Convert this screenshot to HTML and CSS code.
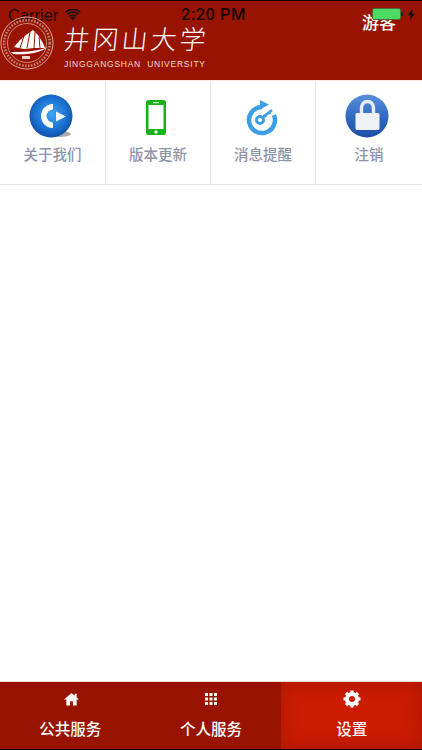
FILE: index.html
```html
<!DOCTYPE html>
<html lang="zh-CN">
<head>
    <meta charset="UTF-8">
    <meta name="viewport" content="width=device-width, initial-scale=1.0">
    <title>井冈山大学</title>
    <link rel="stylesheet" href="styles.css">
</head>
<body>

    <div id="app">
        <!-- Header with logo and status bar over it -->
        <div class="header">
            <div class="statusBar">
                <div class="statusLeft">
                    <span>Carrier</span>
                    <svg class="wifi" width="16" height="12" viewBox="0 0 16 12">
                        <path d="M8 11.5 5.6 8.6a3.6 3.6 0 0 1 4.8 0z" fill="#111"/>
                        <path d="M3.9 6.7a6.2 6.2 0 0 1 8.2 0l-1 1.2a4.7 4.7 0 0 0-6.2 0z" fill="#111"/>
                        <path d="M2 4.6a9 9 0 0 1 12 0l-1 1.2a7.4 7.4 0 0 0-10 0z" fill="#111"/>
                        <path d="M.2 2.5a11.8 11.8 0 0 1 15.6 0l-1 1.2a10.2 10.2 0 0 0-13.6 0z" fill="#111"/>
                    </svg>
                </div>
                <div class="statusTime">2:20 PM</div>
            </div>
            <div class="headerMain">
                <div class="logo">
                    <svg class="seal" width="54" height="54" viewBox="0 0 54 54">
                        <circle cx="27" cy="27" r="26" fill="none" stroke="#e3b9b2" stroke-width=".9"/>
                        <circle cx="27" cy="27" r="19.5" fill="none" stroke="#e3b9b2" stroke-width=".7"/>
                        <circle cx="27" cy="27" r="22.8" fill="none" stroke="#c67f74" stroke-width="2.6" stroke-dasharray="1.6 1.4"/>
                        <path d="M14 31 20 24 26 19 33 14 38 19 43 27 45 32 34 32 24 33z" fill="#fff"/>
                        <path d="M24 20 20 32M30 16 27 32M35 16 34 32M39 21 40 32" stroke="#981400" stroke-width="1" fill="none"/>
                        <path d="M11 36C20 36 36 36 48 31 40 37 28 39 13 38z" fill="#fff"/>
                        <rect x="22" y="40" width="8" height="3" fill="#f0d4cf"/>
                    </svg>
                    <div class="logoText">
                        <div class="logoCn">井冈山大学</div>
                        <div class="logoEn">JINGGANGSHAN&nbsp; UNIVERSITY</div>
                    </div>
                </div>
                <div class="guest">游客</div>
            </div>
            <div class="statusRight">
                <span class="battery"></span>
                <span class="batteryTip"></span>
                <svg width="7" height="11" viewBox="0 0 7 11"><path d="M4.4 0 0 6.2h2.6L1.9 11 7 4.4H4z" fill="#111"/></svg>
            </div>
        </div>

        <!-- Settings grid -->
        <div class="menuRow">
            <div class="menuItem">
                <svg width="44" height="44" viewBox="0 0 44 44">
                    <defs>
                        <radialGradient id="aboutBall" cx="50%" cy="45%" r="58%">
                            <stop offset="0" stop-color="#3ea6f2"/>
                            <stop offset=".65" stop-color="#1a6fd0"/>
                            <stop offset="1" stop-color="#0d4c9e"/>
                        </radialGradient>
                    </defs>
                    <ellipse cx="31" cy="40" rx="11" ry="3" fill="#aaa"/>
                    <circle cx="22" cy="22" r="21.5" fill="url(#aboutBall)"/>
                    <path d="M24 10A12 12 0 0 0 24 34V28.500A6.500 6.500 0 0 1 24 15.500z" fill="#fff"/>
                    <path d="M27 17.500 37 22.500 27 27.500z" fill="#e8f3fc"/>
                </svg>
                <span>关于我们</span>
            </div>
            <div class="menuItem">
                <svg width="44" height="44" viewBox="0 0 44 44">
                    <rect x="12" y="6" width="20" height="35" rx="2.500" fill="#18b318"/>
                    <rect x="14.500" y="11" width="15" height="24" fill="#fff"/>
                    <rect x="19" y="8" width="6" height="1.200" fill="#d6f2d6"/>
                    <circle cx="22" cy="38" r="1.700" fill="#fff"/>
                </svg>
                <span>版本更新</span>
            </div>
            <div class="menuItem">
                <svg width="44" height="44" viewBox="0 0 44 44">
                    <path d="M23 13A13 13 0 1 0 35 21" fill="none" stroke="#3c9fe6" stroke-width="4.500"/>
                    <path d="M21 6 30 10.500 21 15.500z" fill="#3c9fe6"/>
                    <circle cx="21" cy="26" r="3.500" fill="none" stroke="#3c9fe6" stroke-width="3"/>
                    <path d="M23.500 23.500 33 16M27 23 25 20.500M31 20 29 17.500" fill="none" stroke="#3c9fe6" stroke-width="2.600"/>
                </svg>
                <span>消息提醒</span>
            </div>
            <div class="menuItem">
                <svg width="44" height="44" viewBox="0 0 44 44">
                    <defs>
                        <linearGradient id="lockBall" x1="0" y1="0" x2="0" y2="1">
                            <stop offset="0" stop-color="#5b8fdc"/>
                            <stop offset=".55" stop-color="#2f69bf"/>
                            <stop offset="1" stop-color="#1c4da6"/>
                        </linearGradient>
                    </defs>
                    <circle cx="22" cy="22" r="21.500" fill="url(#lockBall)"/>
                    <path d="M16.500 20v-6.500a6 6 0 0 1 12 0V20" fill="none" stroke="#e8edf5" stroke-width="3.400"/>
                    <rect x="10.500" y="19" width="24" height="17" rx="1.500" fill="#eef1f6"/>
                </svg>
                <span>注销</span>
            </div>
        </div>

        <div class="content"></div>

        <!-- Bottom tabs -->
        <div class="tabBar">
            <div class="tab">
                <svg class="homeIcon" width="15" height="14" viewBox="0 0 16 14"><path d="M8 .5 0 7.500h2.500V14h4V9.500h3V14h4V7.500H16l-2.500-2.200V1.500h-2v2z" fill="#fff"/></svg>
                <span>公共服务</span>
            </div>
            <div class="tab">
                <svg width="14" height="14" viewBox="0 0 14 14" fill="#fff">
                    <rect x="1" y="1" width="3" height="3"/><rect x="5.500" y="1" width="3" height="3"/><rect x="10" y="1" width="3" height="3"/>
                    <rect x="1" y="5.500" width="3" height="3"/><rect x="5.500" y="5.500" width="3" height="3"/><rect x="10" y="5.500" width="3" height="3"/>
                    <rect x="1" y="10" width="3" height="3"/><rect x="5.500" y="10" width="3" height="3"/><rect x="10" y="10" width="3" height="3"/>
                </svg>
                <span>个人服务</span>
            </div>
            <div class="tab active">
                <svg width="18" height="18" viewBox="0 0 18 18">
                    <circle cx="9" cy="9" r="5" fill="none" stroke="#fff" stroke-width="4"/>
                    <path d="M9 .5V4M9 14v3.500M.5 9H4M14 9h3.500M3 3l2.500 2.500M12.500 12.500 15 15M3 15l2.500-2.500M12.500 5.500 15 3" stroke="#fff" stroke-width="3.200"/>
                </svg>
                <span>设置</span>
            </div>
        </div>
    </div>

</body>
</html>
```

FILE: styles.css
```css
* {
    box-sizing: border-box;
}

body {
    margin: 0;
    font-family: "Liberation Sans", "Noto Sans CJK SC", sans-serif;
    background: #fff;
}

#app {
    width: 422px;
    height: 750px;
    display: flex;
    flex-direction: column;
    overflow: hidden;
}

.header {
    position: relative;
    height: 80px;
    flex-shrink: 0;
    background: #981400;
    border-top: 1px solid #1a0300;
}

.statusBar {
    display: flex;
    height: 19px;
    padding-left: 8px;
    font-size: 16.5px;
    line-height: 28px;
    color: #1a0603;
}

.statusLeft {
    display: flex;
    gap: 7px;
    width: 173px;
}

.wifi {
    margin-top: 8px;
}

.statusTime {
    font-family: Roboto, "Liberation Sans", sans-serif;
    font-weight: 500;
    font-size: 16.5px;
    letter-spacing: .5px;
}

.statusRight {
    position: absolute;
    top: 7px;
    right: 7px;
    display: flex;
    align-items: center;
}

.battery {
    width: 29px;
    height: 12px;
    background: #4cd964;
    border-radius: 2px;
    border: 1px solid #4a6a3a;
}

.batteryTip {
    width: 2px;
    height: 4px;
    margin-right: 5px;
    background: #222;
}

.headerMain {
    display: flex;
    justify-content: space-between;
    padding-right: 26px;
}

.logo {
    display: flex;
    gap: 10px;
    margin-top: -4px;
}

.logoText {
    padding-top: 4px;
}

.logoCn {
    font-family: "Noto Sans CJK SC", sans-serif;
    font-size: 26px;
    font-weight: 300;
    line-height: 36px;
    letter-spacing: 3px;
    color: #fff;
    transform: skewX(-6deg);
    white-space: nowrap;
}

.logoEn {
    margin-top: 3px;
    font-size: 8.5px;
    line-height: 10px;
    letter-spacing: .75px;
    color: #f0d8d4;
    white-space: nowrap;
}

.guest {
    margin-top: -7px;
    font-size: 17px;
    font-weight: 500;
    line-height: 22px;
    color: #fff;
}

.menuRow {
    display: grid;
    grid-template-columns: 106px 105px 105px 106px;
    height: 105px;
    flex-shrink: 0;
    border-top: 1px solid #fdeae6;
    border-bottom: 1px solid #e6e6e6;
}

.menuItem {
    display: flex;
    flex-direction: column;
    align-items: center;
    gap: 7px;
    padding-top: 13px;
    border-right: 1px solid #e6e6e6;
    font-size: 14.5px;
    font-weight: 500;
    line-height: 20px;
    color: #8e94a8;
}

.menuItem svg {
    margin-right: 4px;
}

.menuItem:last-child {
    border-right: none;
}

.content {
    flex: 1;
}

.tabBar {
    display: flex;
    height: 69px;
    flex-shrink: 0;
    background: #981400;
    border-top: 1px solid #f5ddd8;
    border-bottom: 1px solid #1a0300;
}

.tab {
    flex: 1;
    display: flex;
    flex-direction: column;
    align-items: center;
    gap: 11px;
    height: 100%;
    padding-top: 8px;
    font-size: 15.5px;
    line-height: 22px;
    font-weight: 500;
    color: #fff;
}

.tab svg {
    height: 18px;
}

.homeIcon {
    margin-left: 2px;
}

.tab.active {
    background: #cc1c00;
    box-shadow: inset 0 0 20px #a81700;
}
```
